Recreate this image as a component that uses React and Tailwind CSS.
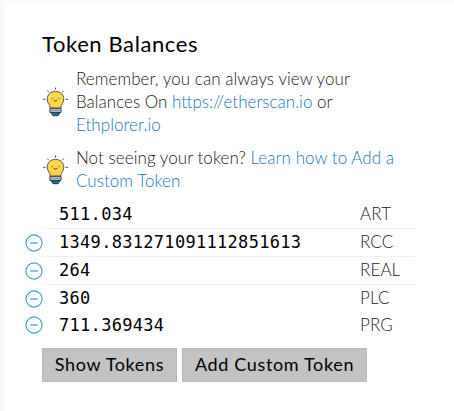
const tokens = [
  { balance: '511.034', symbol: 'ART', custom: false, row: 'h-[28px] border-b', icon: 'pt-[5px]' },
  { balance: '1349.831271091112851613', symbol: 'RCC', custom: true, row: 'h-[28px] border-b', icon: 'pt-[5px]' },
  { balance: '264', symbol: 'REAL', custom: true, row: 'h-[28px] border-b', icon: 'pt-[5px]' },
  { balance: '360', symbol: 'PLC', custom: true, row: 'h-[27px]', icon: 'pt-[4.6px]' },
  { balance: '711.369434', symbol: 'PRG', custom: true, row: 'h-[27px]', icon: 'pt-[4.4px]' },
];

function Bulb() {
  return (
    <svg className="h-[32px] w-[27px] shrink-0" viewBox="0 0 28 32" fill="none">
      <path
        d="M14 1v2M5.5 4.2l1.6 1.8M22.5 4.2l-1.6 1.8M1 13.2h2.6M24.4 13.2H27"
        stroke="#444"
        strokeWidth="1"
      />
      <path
        d="M14 5c-5 0-8.6 3.5-8.6 8 0 4.2 3 5.4 3.2 9.3h10.8c.2-3.9 3.2-5.1 3.2-9.3 0-4.5-3.6-8-8.6-8Z"
        fill="#fdd648"
        stroke="#4a4026"
        strokeWidth="0.9"
      />
      <path d="M7.6 12.5c.2-2.5 1.9-4.5 4.2-5.1" stroke="#ffe98b" strokeWidth="1" />
      <path d="M10.4 11.8v1M17.6 11.8v1M12.2 14.3q1.8 1.5 3.6 0" stroke="#4b3b16" strokeWidth="1" />
      <path d="M8.2 22.6h11.6v4.2H8.2z" fill="#b9c3c9" stroke="#333b40" strokeWidth="1" />
      <path d="M9 24.7h10" stroke="#79858c" strokeWidth="0.8" />
      <path d="M9.4 27.2h9.2l-2 3h-5.2z" fill="#167da8" stroke="#20323e" strokeWidth="1" />
    </svg>
  );
}

function RemoveIcon() {
  return (
    <svg className="size-[18px] shrink-0" viewBox="0 0 18 18" fill="none" stroke="#3a9fc7">
      <circle cx="9" cy="9" r="8.1" strokeWidth="1.1" />
      <path d="M5.2 9h7.6" strokeWidth="1.2" />
    </svg>
  );
}

export default function App() {
  return (
    <div className="h-[411px] w-[454px] overflow-hidden bg-[#f9f9f9] pt-px pl-[4px] font-['Lato',sans-serif] text-black">
      <section className="h-full bg-white pt-[28px] pl-[21px]">
        <h2 className="ml-[17px] h-[30px] text-[22px] leading-[30px] tracking-[0.6px] whitespace-nowrap">
          Token Balances
        </h2>
        <div className="mt-[8px] ml-[17px] flex h-[69px] gap-[7px] text-[17px] leading-[23px] font-light whitespace-nowrap text-[#222]">
          <div className="pt-[18.5px]"><Bulb /></div>
          <div>
            <p className="tracking-[0.05px]">Remember, you can always view your</p>
            <p>
              Balances On <a className="text-[#1a78b4]">https://etherscan.io</a> or
            </p>
            <p className="tracking-[0.05px]"><a className="text-[#1a78b4]">Ethplorer.io</a></p>
          </div>
        </div>
        <div className="mt-[10px] ml-[17px] flex h-[46px] gap-[7px] text-[17px] leading-[23px] font-light whitespace-nowrap text-[#222]">
          <div className="pt-[7.5px]"><Bulb /></div>
          <div>
            <p className="tracking-[0.05px]">
              Not seeing your token? <a className="text-[#1a78b4]">Learn how to Add a</a>
            </p>
            <p className="tracking-[0.03px]"><a className="text-[#1a78b4]">Custom Token</a></p>
          </div>
        </div>
        <ul className="mt-[9px] w-[390px]">
          {tokens.map((t) => (
            <li key={t.symbol} className="flex">
              <div className={`flex h-[27px] w-[17px] ${t.icon}`}>{t.custom && <RemoveIcon />}</div>
              <div className={`flex flex-1 items-start border-[#efefef] pl-[17px] ${t.row}`}>
                <span className="w-[301px] font-['DejaVu_Sans_Mono',monospace] text-[17px] leading-[26px] tracking-[0.3px]">
                  {t.balance}
                </span>
                <span className="text-[17px] leading-[26px] font-light tracking-[0.1px] text-[#222]">{t.symbol}</span>
              </div>
            </li>
          ))}
        </ul>
        <div className="mt-[9px] ml-[17px] flex gap-[5px] text-[18px] whitespace-nowrap">
          <button className="h-[34px] w-[135px] border border-[#bababa] bg-[#c3c3c3] pb-[2px] tracking-[0.65px]">Show Tokens</button>
          <button className="h-[34px] w-[185px] border border-[#bababa] bg-[#c3c3c3] pb-[2px] tracking-[0.65px]">Add Custom Token</button>
        </div>
      </section>
    </div>
  );
}
